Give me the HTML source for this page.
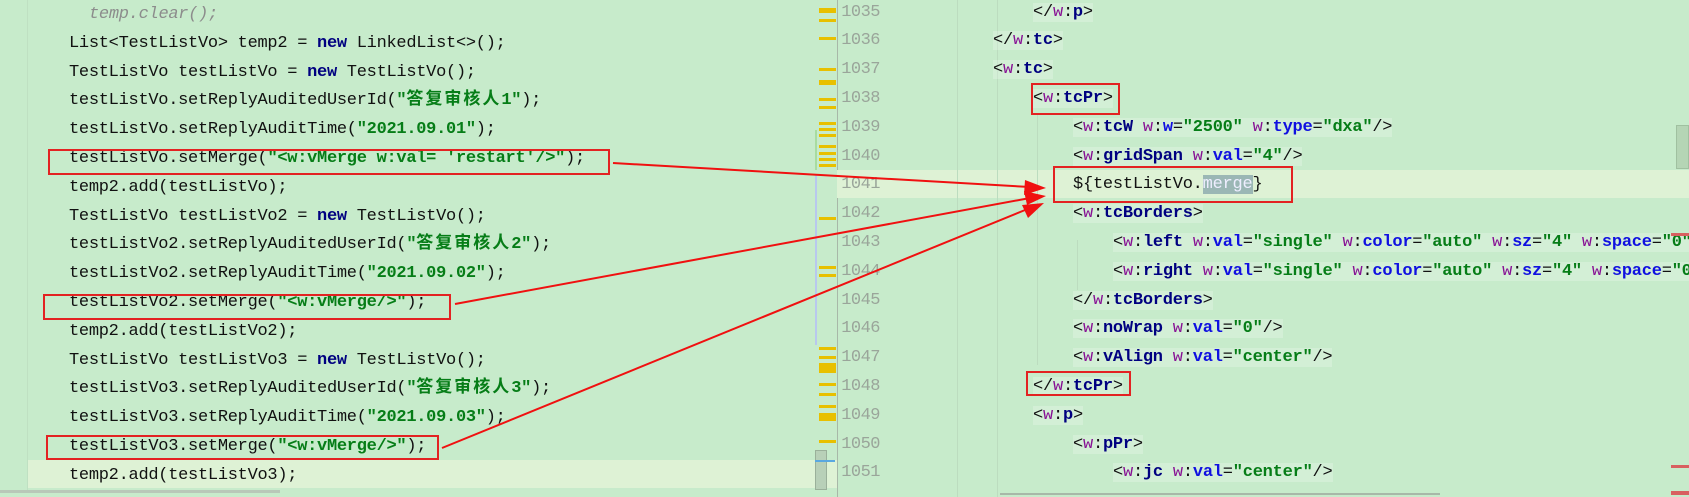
<!DOCTYPE html>
<html><head><meta charset="utf-8"><style>
*{margin:0;padding:0;box-sizing:border-box}
body{width:1689px;height:497px;overflow:hidden;background:#c7ebcb;position:relative;font-family:"Liberation Mono","Noto Sans CJK SC",monospace;font-size:17px;letter-spacing:-0.28px;color:#111}
.l{position:absolute;height:28.8px;line-height:28.8px;white-space:pre}
.r{font-size:17px;letter-spacing:-0.23px}
.k{color:#000080;font-weight:bold}
.s{color:#067d17;font-weight:bold}
.z{letter-spacing:2px}
.c{color:#8c8c8c;font-style:italic}
.tb{background:rgba(255,255,255,0.22)}
.p{color:#871094}
.n{color:#000080;font-weight:bold}
.a{color:#1010e0;font-weight:bold}
.v{color:#067d17;font-weight:bold}
.num{position:absolute;left:840px;width:40px;text-align:right;color:#9aa59a;height:28.8px;line-height:28.8px;font-size:17px;letter-spacing:-0.5px}
.box{position:absolute;border:2px solid #e32222}
.ym{position:absolute;left:819px;width:17px;height:3px;background:#e8c000}
</style></head><body>
<!-- left -->
<div style="position:absolute;left:28px;top:460px;width:809px;height:28px;background:#def2d5"></div>
<div style="position:absolute;left:27px;top:0;width:1px;height:490px;background:#bfe0c2"></div>
<div class="l c" style="left:89px;top:1px">temp.clear();</div>
<div class="l" style="left:69px;top:29.8px">List&lt;TestListVo&gt; temp2 = <span class="k">new</span> LinkedList&lt;&gt;();</div>
<div class="l" style="left:69px;top:58.6px">TestListVo testListVo = <span class="k">new</span> TestListVo();</div>
<div class="l" style="left:69px;top:87.4px">testListVo.setReplyAuditedUserId(<span class="s">"<span class="z">答复审核人</span>1"</span>);</div>
<div class="l" style="left:69px;top:116.2px">testListVo.setReplyAuditTime(<span class="s">"2021.09.01"</span>);</div>
<div class="l" style="left:69px;top:145px">testListVo.setMerge(<span class="s">"&lt;w:vMerge w:val= 'restart'/&gt;"</span>);</div>
<div class="l" style="left:69px;top:173.8px">temp2.add(testListVo);</div>
<div class="l" style="left:69px;top:202.6px">TestListVo testListVo2 = <span class="k">new</span> TestListVo();</div>
<div class="l" style="left:69px;top:231.4px">testListVo2.setReplyAuditedUserId(<span class="s">"<span class="z">答复审核人</span>2"</span>);</div>
<div class="l" style="left:69px;top:260.2px">testListVo2.setReplyAuditTime(<span class="s">"2021.09.02"</span>);</div>
<div class="l" style="left:69px;top:289px">testListVo2.setMerge(<span class="s">"&lt;w:vMerge/&gt;"</span>);</div>
<div class="l" style="left:69px;top:317.8px">temp2.add(testListVo2);</div>
<div class="l" style="left:69px;top:346.6px">TestListVo testListVo3 = <span class="k">new</span> TestListVo();</div>
<div class="l" style="left:69px;top:375.4px">testListVo3.setReplyAuditedUserId(<span class="s">"<span class="z">答复审核人</span>3"</span>);</div>
<div class="l" style="left:69px;top:404.2px">testListVo3.setReplyAuditTime(<span class="s">"2021.09.03"</span>);</div>
<div class="l" style="left:69px;top:433px">testListVo3.setMerge(<span class="s">"&lt;w:vMerge/&gt;"</span>);</div>
<div class="l" style="left:69px;top:461.8px">temp2.add(testListVo3);</div>
<div style="position:absolute;left:0;top:490px;width:280px;height:3px;background:#b8c8b8"></div>
<div class="box" style="left:48px;top:149px;width:562px;height:26px"></div>
<div class="box" style="left:43px;top:294px;width:408px;height:26px"></div>
<div class="box" style="left:46px;top:435px;width:393px;height:25px"></div>

<!-- gutter -->
<div style="position:absolute;left:837px;top:0;width:1px;height:497px;background:#a8b8a8"></div>
<div style="position:absolute;left:837px;top:170px;width:852px;height:28px;background:#def2d5"></div>
<div class="ym" style="top:8px;height:5px"></div><div class="ym" style="top:19px"></div>
<div class="ym" style="top:37px"></div><div class="ym" style="top:68px"></div><div class="ym" style="top:80px;height:5px"></div>
<div class="ym" style="top:98px"></div><div class="ym" style="top:106px"></div>
<div class="ym" style="top:122px"></div><div class="ym" style="top:128px"></div><div class="ym" style="top:134px"></div><div class="ym" style="top:145px"></div><div class="ym" style="top:152px"></div><div class="ym" style="top:158px"></div><div class="ym" style="top:164px"></div>
<div class="ym" style="top:217px"></div><div class="ym" style="top:266px"></div><div class="ym" style="top:274px"></div>
<div class="ym" style="top:347px"></div><div class="ym" style="top:356px"></div><div class="ym" style="top:363px;height:10px"></div><div class="ym" style="top:383px"></div><div class="ym" style="top:393px"></div><div class="ym" style="top:405px"></div><div class="ym" style="top:413px;height:8px"></div><div class="ym" style="top:440px"></div>
<div style="position:absolute;left:815px;top:450px;width:12px;height:40px;background:#b8d0b8;border:1px solid #9ab09a"></div>
<div style="position:absolute;left:815px;top:460px;width:20px;height:2px;background:#5aa8e0"></div>
<div style="position:absolute;left:815px;top:130px;width:2px;height:40px;background:#a8dca0"></div>
<div style="position:absolute;left:815px;top:175px;width:2px;height:170px;background:#b8c8ee"></div>
<div style="position:absolute;left:957px;top:0;width:1px;height:497px;background:#bcdcbf"></div>
<div style="position:absolute;left:997px;top:0;width:1px;height:497px;background:#bcdcbf"></div>
<div style="position:absolute;left:1037px;top:115px;width:1px;height:250px;background:#bcdcbf"></div>
<div style="position:absolute;left:1077px;top:240px;width:1px;height:50px;background:#bcdcbf"></div>
<div class="num" style="top:-1.4px">1035</div><div class="num" style="top:27.4px">1036</div><div class="num" style="top:56.2px">1037</div><div class="num" style="top:85px">1038</div><div class="num" style="top:113.8px">1039</div><div class="num" style="top:142.6px">1040</div><div class="num" style="top:171.4px">1041</div><div class="num" style="top:200.2px">1042</div><div class="num" style="top:229px">1043</div><div class="num" style="top:257.8px">1044</div><div class="num" style="top:286.6px">1045</div><div class="num" style="top:315.4px">1046</div><div class="num" style="top:344.2px">1047</div><div class="num" style="top:373px">1048</div><div class="num" style="top:401.8px">1049</div><div class="num" style="top:430.6px">1050</div><div class="num" style="top:459.4px">1051</div>

<!-- right code -->
<div class="l r" style="left:1033px;top:-1.4px"><span class="tb">&lt;/<span class="p">w</span>:<span class="n">p</span>&gt;</span></div>
<div class="l r" style="left:993px;top:27.4px"><span class="tb">&lt;/<span class="p">w</span>:<span class="n">tc</span>&gt;</span></div>
<div class="l r" style="left:993px;top:56.2px"><span class="tb">&lt;<span class="p">w</span>:<span class="n">tc</span>&gt;</span></div>
<div class="l r" style="left:1033px;top:85px"><span class="tb">&lt;<span class="p">w</span>:<span class="n">tcPr</span>&gt;</span></div>
<div class="l r" style="left:1073px;top:113.8px"><span class="tb">&lt;<span class="p">w</span>:<span class="n">tcW</span> <span class="p">w</span>:<span class="a">w</span>=<span class="v">"2500"</span> <span class="p">w</span>:<span class="a">type</span>=<span class="v">"dxa"</span>/&gt;</span></div>
<div class="l r" style="left:1073px;top:142.6px"><span class="tb">&lt;<span class="p">w</span>:<span class="n">gridSpan</span> <span class="p">w</span>:<span class="a">val</span>=<span class="v">"4"</span>/&gt;</span></div>
<div class="l r" style="left:1073px;top:171.4px">${testListVo.<span style="background:#9bb7b5;color:#eef">merge</span>}</div>
<div class="l r" style="left:1073px;top:200.2px"><span class="tb">&lt;<span class="p">w</span>:<span class="n">tcBorders</span>&gt;</span></div>
<div class="l r" style="left:1113px;top:229px"><span class="tb">&lt;<span class="p">w</span>:<span class="n">left</span> <span class="p">w</span>:<span class="a">val</span>=<span class="v">"single"</span> <span class="p">w</span>:<span class="a">color</span>=<span class="v">"auto"</span> <span class="p">w</span>:<span class="a">sz</span>=<span class="v">"4"</span> <span class="p">w</span>:<span class="a">space</span>=<span class="v">"0"</span>/&gt;</span></div>
<div class="l r" style="left:1113px;top:257.8px"><span class="tb">&lt;<span class="p">w</span>:<span class="n">right</span> <span class="p">w</span>:<span class="a">val</span>=<span class="v">"single"</span> <span class="p">w</span>:<span class="a">color</span>=<span class="v">"auto"</span> <span class="p">w</span>:<span class="a">sz</span>=<span class="v">"4"</span> <span class="p">w</span>:<span class="a">space</span>=<span class="v">"0"</span>/&gt;</span></div>
<div class="l r" style="left:1073px;top:286.6px"><span class="tb">&lt;/<span class="p">w</span>:<span class="n">tcBorders</span>&gt;</span></div>
<div class="l r" style="left:1073px;top:315.4px"><span class="tb">&lt;<span class="p">w</span>:<span class="n">noWrap</span> <span class="p">w</span>:<span class="a">val</span>=<span class="v">"0"</span>/&gt;</span></div>
<div class="l r" style="left:1073px;top:344.2px"><span class="tb">&lt;<span class="p">w</span>:<span class="n">vAlign</span> <span class="p">w</span>:<span class="a">val</span>=<span class="v">"center"</span>/&gt;</span></div>
<div class="l r" style="left:1033px;top:373px"><span class="tb">&lt;/<span class="p">w</span>:<span class="n">tcPr</span>&gt;</span></div>
<div class="l r" style="left:1033px;top:401.8px"><span class="tb">&lt;<span class="p">w</span>:<span class="n">p</span>&gt;</span></div>
<div class="l r" style="left:1073px;top:430.6px"><span class="tb">&lt;<span class="p">w</span>:<span class="n">pPr</span>&gt;</span></div>
<div class="l r" style="left:1113px;top:459.4px"><span class="tb">&lt;<span class="p">w</span>:<span class="n">jc</span> <span class="p">w</span>:<span class="a">val</span>=<span class="v">"center"</span>/&gt;</span></div>
<div style="position:absolute;left:1000px;top:493px;width:440px;height:2px;background:#a8b8a8"></div>
<div class="box" style="left:1031px;top:83px;width:89px;height:32px"></div>
<div class="box" style="left:1053px;top:166px;width:240px;height:37px"></div>
<div class="box" style="left:1026px;top:371px;width:105px;height:25px"></div>
<!-- right scrollbar marks -->
<div style="position:absolute;left:1676px;top:125px;width:13px;height:44px;background:#b5d5b5;border:1px solid #a0c0a0"></div>
<div style="position:absolute;left:1671px;top:233px;width:18px;height:3px;background:#d86060"></div>
<div style="position:absolute;left:1671px;top:465px;width:18px;height:3px;background:#d86060"></div>
<div style="position:absolute;left:1671px;top:491px;width:18px;height:4px;background:#d86060"></div>
<!-- arrows -->
<svg style="position:absolute;left:0;top:0" width="1689" height="497">
<g stroke="#f01010" stroke-width="2" fill="none">
<line x1="613" y1="163" x2="1030" y2="187"/>
<line x1="455" y1="304" x2="1030" y2="198"/>
<line x1="442" y1="448" x2="1030" y2="208"/>
</g>
<g fill="#f01010">
<polygon points="1046,188 1025,180 1024,195"/>
<polygon points="1046,196 1024,191 1027,205"/>
<polygon points="1044,203 1022,205 1028,218"/>
</g>
</svg>
</body></html>
